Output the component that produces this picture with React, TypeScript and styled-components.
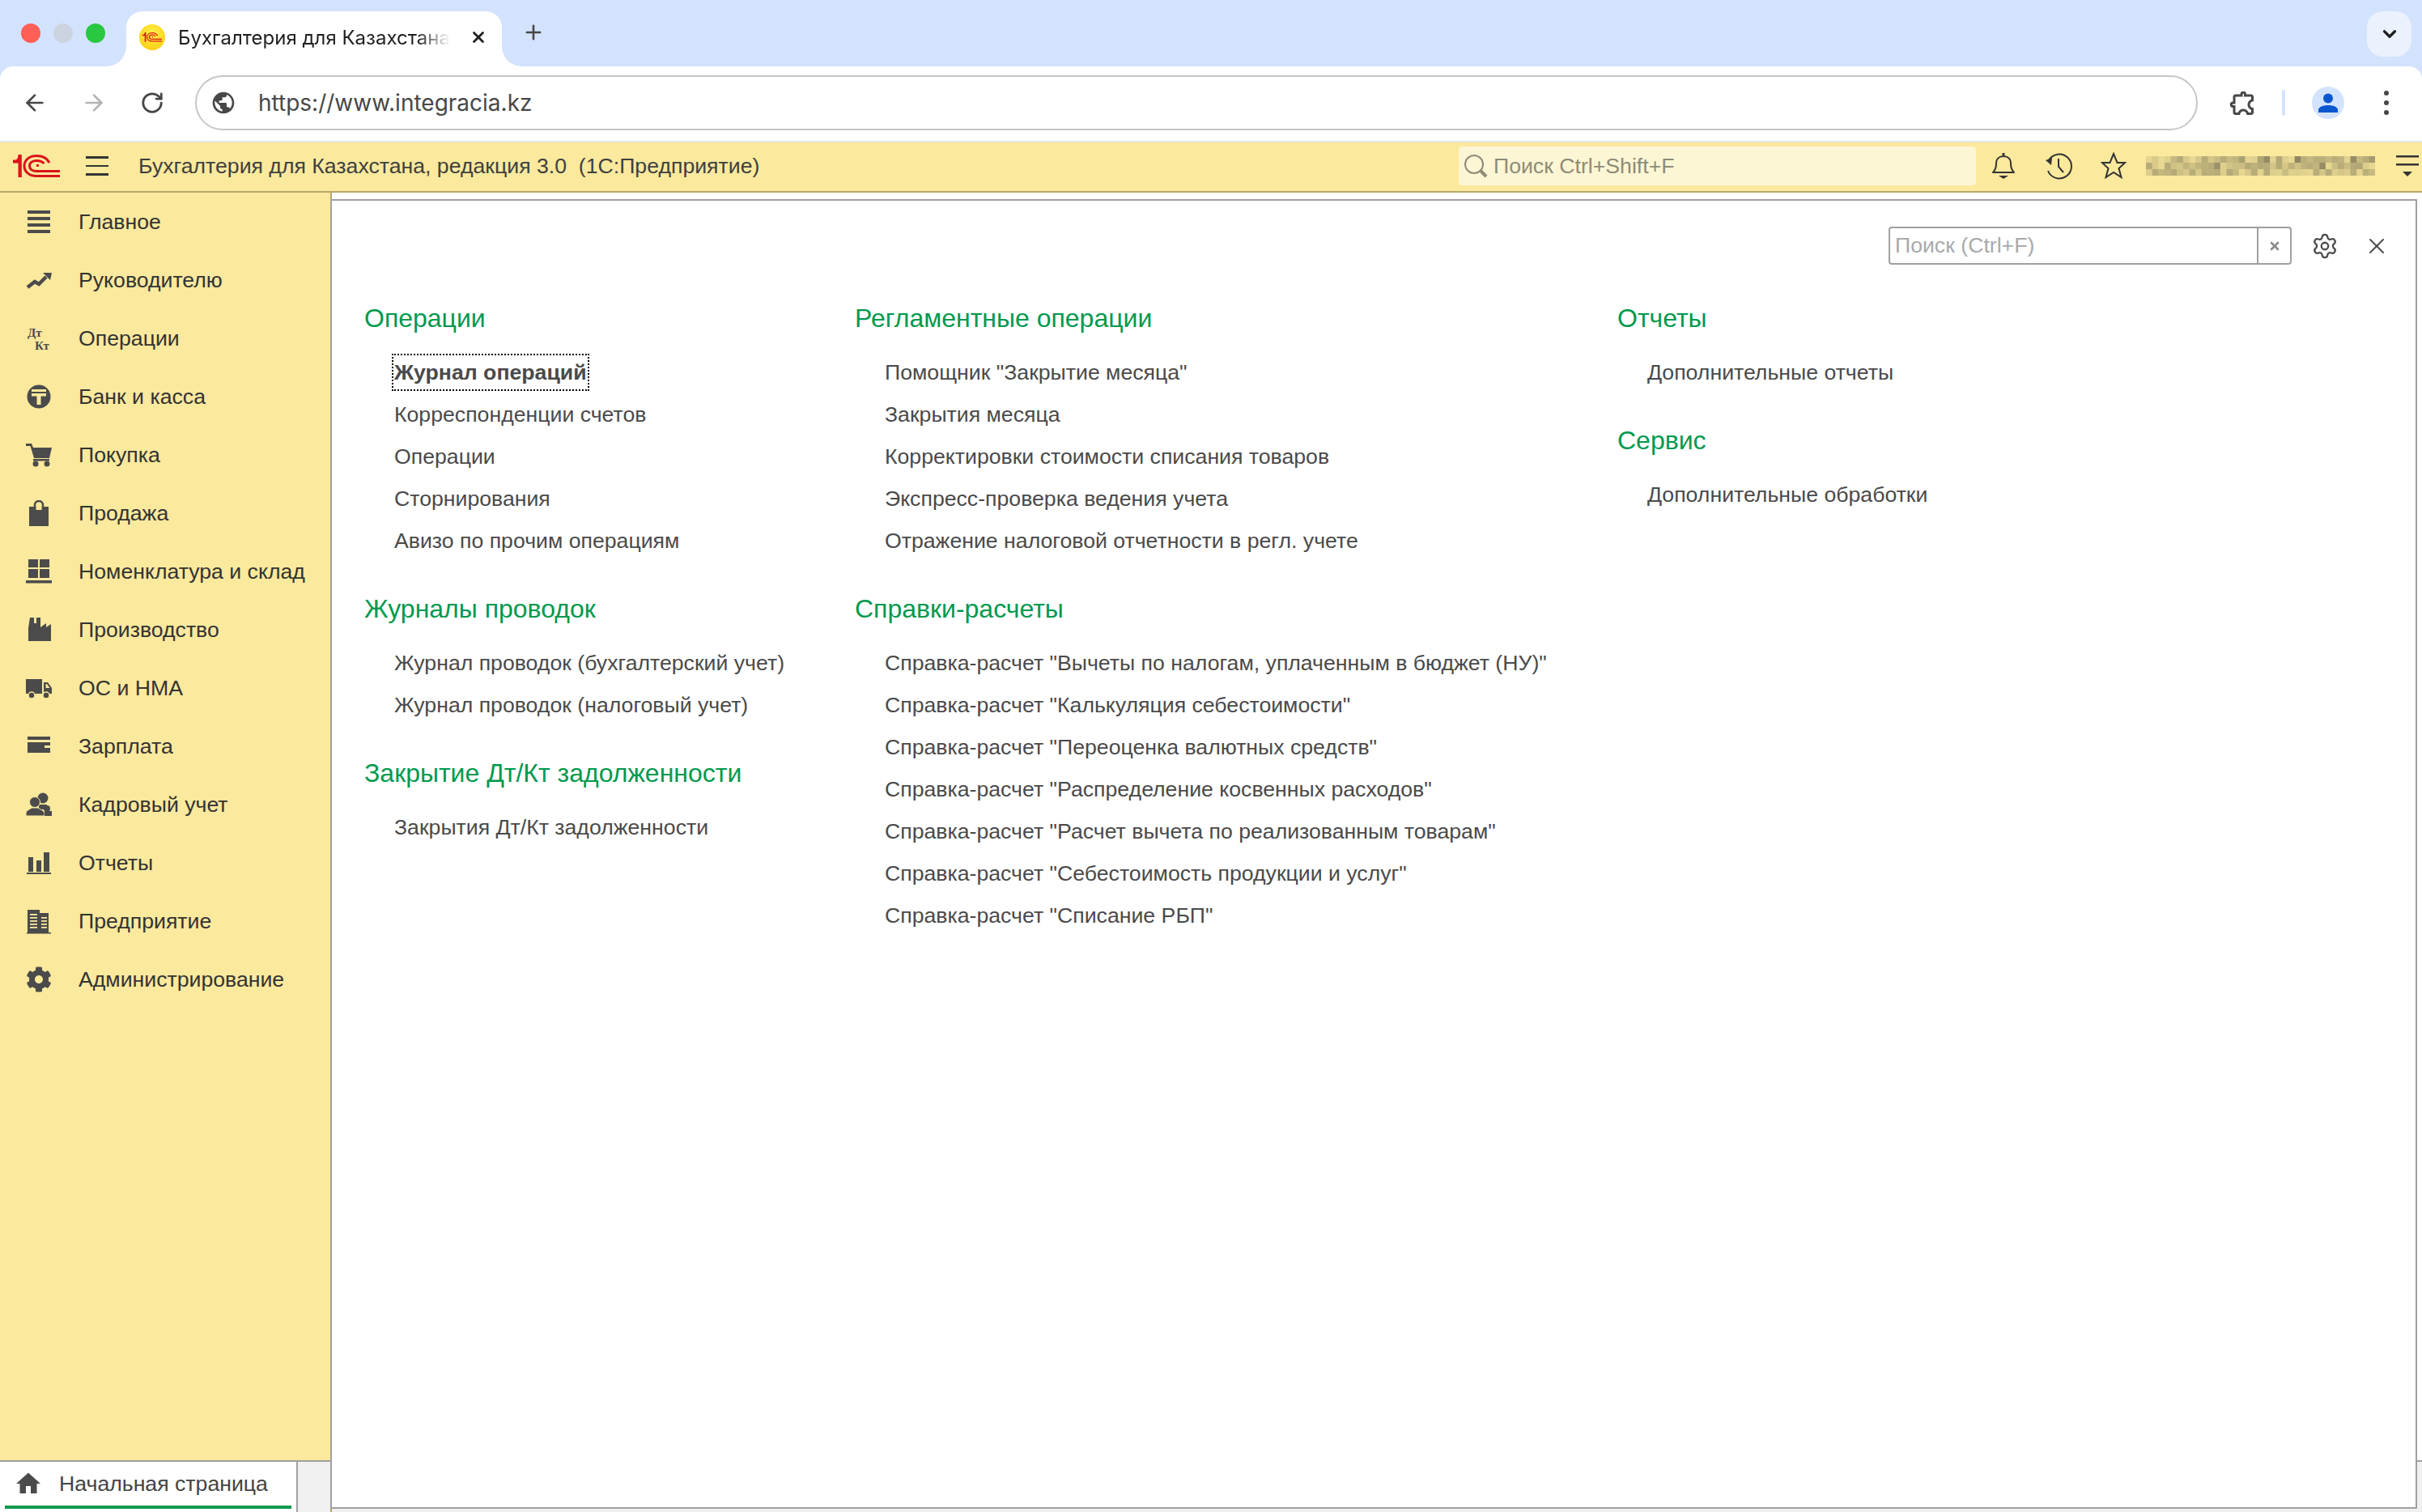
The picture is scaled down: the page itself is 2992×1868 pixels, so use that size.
import React from "react";
import styled, { createGlobalStyle } from "styled-components";
import { MdPublic, MdOutlineExtension, MdHome } from "react-icons/md";
import { FaCog } from "react-icons/fa";
import { ArrowLeft, ArrowRight, RotateCw, Plus, X, ChevronDown, Settings } from "lucide-react";

const GlobalStyle = createGlobalStyle`
  html, body { margin: 0; padding: 0; overflow: hidden; background: #fff; }
  body { font-family: "Liberation Sans", Arial, sans-serif; }
  * { box-sizing: border-box; }
`;

const Page = styled.div`
  display: flex;
  flex-direction: column;
  width: 100vw;
  height: 100vh;
  background: #d3e3fd;
`;

/* browser chrome */
const TabStrip = styled.div`
  display: flex;
  flex: 0 0 82px;
  padding-left: 26px;
`;
const Lights = styled.div`
  display: flex;
  gap: 16px;
  align-items: center;
  width: 130px;
  height: 82px;
`;
const Light = styled.span<{ $color: string }>`
  width: 24px;
  height: 24px;
  border-radius: 50%;
  background: ${(p) => p.$color};
`;
const Tab = styled.div`
  position: relative;
  display: flex;
  align-items: center;
  width: 464px;
  height: 68px;
  margin-top: 14px;
  padding: 0 0 4px 16px;
  background: #fff;
  border-radius: 20px 20px 0 0;

  &::before, &::after {
    content: "";
    position: absolute;
    bottom: 0;
    width: 24px;
    height: 24px;
  }
  &::before {
    left: -24px;
    background: radial-gradient(circle at 0 0, transparent 23.5px, #fff 24px);
  }
  &::after {
    right: -24px;
    background: radial-gradient(circle at 100% 0, transparent 23.5px, #fff 24px);
  }
`;
const Favicon = styled.div`
  display: flex;
  align-items: center;
  justify-content: center;
  flex: 0 0 32px;
  height: 32px;
  border-radius: 50%;
  background: radial-gradient(circle at 50% 35%, #fff04a, #fcd116 75%, #e8b820);
`;
const TabTitle = styled.div`
  flex: 0 0 336px;
  margin-left: 16px;
  overflow: hidden;
  white-space: nowrap;
  font-family: Inter, sans-serif;
  font-size: 24px;
  color: #1f1f1f;
  -webkit-mask-image: linear-gradient(to right, #000 88%, transparent 100%);
  mask-image: linear-gradient(to right, #000 88%, transparent 100%);
`;
const TabClose = styled.div`
  display: flex;
  margin-left: 24px;
  color: #1f1f1f;
`;
const NewTab = styled.div`
  display: flex;
  align-items: center;
  margin-left: 25px;
  height: 82px;
  padding-bottom: 2px;
  color: #474747;
`;
const TabListButton = styled.div`
  display: flex;
  align-items: center;
  justify-content: center;
  width: 55px;
  height: 56px;
  margin: 14px 13px 0 auto;
  border-radius: 20px;
  background: #ebf1fd;
  color: #1f1f1f;
`;

const Toolbar = styled.div`
  display: flex;
  align-items: center;
  flex: 0 0 94px;
  padding-left: 7px;
  padding-bottom: 2px;
  background: #fff;
  border-radius: 16px 16px 0 0;
  border-bottom: 2px solid #e3e3e3;
`;
const NavButton = styled.div<{ $muted?: boolean }>`
  display: flex;
  justify-content: center;
  width: 72.5px;
  color: ${(p) => (p.$muted ? "#b3b3b3" : "#474747")};
`;
const Omnibox = styled.div`
  display: flex;
  align-items: center;
  width: 2474px;
  height: 68px;
  margin-left: 16.5px;
  padding-left: 17px;
  border: 2px solid #c7c7c7;
  border-radius: 34px;
  color: #474747;
`;
const Url = styled.span`
  margin-left: 27px;
  font-family: Inter, sans-serif;
  font-size: 28px;
  color: #474747;
`;
const ExtensionSlot = styled.div`
  display: flex;
  justify-content: center;
  width: 60px;
  margin-left: 24px;
  color: #474747;
`;
const ToolbarDivider = styled.span`
  width: 4px;
  height: 32px;
  margin-left: 20px;
  border-radius: 2px;
  background: #d3e3fd;
`;
const Avatar = styled.div`
  display: flex;
  align-items: center;
  justify-content: center;
  width: 40px;
  height: 40px;
  margin-left: 33px;
  border-radius: 50%;
  background: #d3e3fd;
`;
const MenuDots = styled.div`
  display: flex;
  flex-direction: column;
  align-items: center;
  gap: 6px;
  width: 40px;
  margin-left: 32px;
`;
const Dot = styled.span`
  width: 6px;
  height: 6px;
  border-radius: 50%;
  background: #474747;
`;

/* 1C header */
const AppBar = styled.div`
  display: flex;
  align-items: center;
  flex: 0 0 62px;
  padding: 0 0 2px 16px;
  background: #fbe99d;
  border-bottom: 2px solid #b5a86e;
`;
const Burger = styled.div`
  display: flex;
  flex-direction: column;
  gap: 8px;
  width: 28px;
  margin-left: 32px;
`;
const BurgerLine = styled.span`
  height: 2.5px;
  background: #333;
`;
const AppTitle = styled.div`
  flex: 1;
  margin-left: 37px;
  font-size: 26.67px;
  color: #3f3f3f;
  white-space: pre;
`;
const GlobalSearch = styled.div`
  display: flex;
  align-items: center;
  width: 639px;
  height: 48px;
  padding-left: 5px;
  border-radius: 4px;
  background: #fdf6d4;
`;
const GlobalSearchText = styled.span`
  margin-left: 6px;
  font-size: 26.67px;
  color: #8e8b78;
`;
const BarIcon = styled.div`
  display: flex;
  justify-content: center;
  width: 68px;
  color: #333;
  &:first-of-type { margin-left: 7px; }
`;
const BlurredUser = styled.svg`
  display: block;
  width: 283px;
  height: 24px;
  margin-left: 6px;
`;
const FilterIcon = styled.div`
  display: flex;
  justify-content: center;
  width: 36px;
  margin-left: 22px;
`;

/* main area */
const Main = styled.div`
  flex: 1;
  display: grid;
  grid-template-columns: 408px 1fr;
  grid-template-rows: 1fr 64px;
  min-height: 0;
`;
const Sidebar = styled.nav`
  background: #fbe99d;
`;
const SideItem = styled.div`
  display: flex;
  align-items: center;
  height: 72px;
  padding-left: 32px;
  font-size: 26.67px;
  color: #333;
`;
const SideLabel = styled.span`
  margin-left: 33px;
`;
const SideIcon = styled.svg`
  flex: 0 0 32px;
  width: 32px;
  height: 32px;
  fill: #4b4b4b;
`;
const OpenTabs = styled.div`
  display: flex;
  background: #f0f0f0;
  border-top: 2px solid #a0a0a0;
`;
const HomeTab = styled.div`
  width: 368px;
  padding: 0 6px 4px;
  background: #fff;
  border-right: 2px solid #a0a0a0;
`;
const HomeTabInner = styled.div`
  display: flex;
  align-items: center;
  height: 100%;
  padding-left: 11px;
  border-bottom: 4px solid #00994d;
  font-size: 26.67px;
  color: #444;
`;
const HomeLabel = styled.span`
  margin-left: 20px;
  white-space: nowrap;
`;
const PanelArea = styled.div`
  grid-column: 2;
  grid-row: 1 / 3;
  display: flex;
  padding: 8px 6px 4px 0;
  border-left: 2px solid #b5a86e;
  background: linear-gradient(to bottom, #fff 1566px, #a0a0a0 1566px, #a0a0a0 1568px, #f0f0f0 1568px);
`;
const Panel = styled.section`
  flex: 1;
  margin-left: -2px;
  background: #fff;
  border: 2px solid #a0a0a0;
`;
const PanelTools = styled.div`
  display: flex;
  align-items: center;
  justify-content: flex-end;
  height: 47px;
  margin-top: 32px;
  padding-right: 28px;
`;
const FindBox = styled.div`
  display: flex;
  width: 498px;
  height: 47px;
  border: 2px solid #a0a0a0;
  border-radius: 4px;
`;
const FindInput = styled.div`
  flex: 1;
  padding-left: 6px;
  line-height: 43px;
  font-size: 26.67px;
  color: #a9a9a9;
`;
const FindClear = styled.div`
  display: flex;
  align-items: center;
  justify-content: center;
  width: 41px;
  border-left: 2px solid #a0a0a0;
  color: #8c8c8c;
`;
const ToolButton = styled.div<{ $gap: number }>`
  display: flex;
  justify-content: center;
  width: 40px;
  margin-left: ${(p) => p.$gap}px;
  color: #4b4b4b;
`;
const Columns = styled.div`
  display: grid;
  grid-template-columns: 606px 942px 1fr;
  margin-top: 46px;
  padding-left: 40px;
`;
const Section = styled.div`
  margin-bottom: 38px;
`;
const SectionTitle = styled.h3`
  height: 40px;
  margin: 0 0 21px;
  line-height: 40px;
  font-size: 32px;
  font-weight: 400;
  color: #00994d;
  white-space: nowrap;
`;
const Command = styled.div<{ $active?: boolean }>`
  height: 52px;
  padding-left: 37px;
  line-height: 52px;
  font-size: 26.67px;
  font-weight: ${(p) => (p.$active ? 700 : 400)};
  color: #4a4a4a;
  white-space: nowrap;
`;
const FocusFrame = styled.span`
  display: inline-block;
  height: 40px;
  line-height: 40px;
  outline: 2px dotted #000;
  outline-offset: 1px;
`;

const LogoMark = ({ width }: { width: number }) => (
  <svg width={width} viewBox="0 0 58 28" style={{ display: "block" }}>
    <path d="M0 6.5h3c2 0 3.5-2.5 3.5-6.5h4.3v28H6.5V10.5H0z" fill="#d9141c" />
    <g fill="none" stroke="#d9141c" strokeWidth="3">
      <path d="M45 10C42 4 37 1.5 29 1.5 20 1.500 14 7 14 14s6 12.500 15 12.500H58" />
      <path d="M38.500 11C36 8.500 33 7.500 29.500 7.500 24 7.500 20.500 10 20.500 14s3.500 6.500 9 6.500H58" />
      <path d="M32 13.500h-3" />
    </g>
  </svg>
);

const sideIcons: Record<string, React.ReactNode> = {
  main: (
    <>
      <rect x="2" y="2" width="28" height="4" />
      <rect x="2" y="10" width="28" height="4" />
      <rect x="2" y="18" width="28" height="4" />
      <rect x="2" y="26" width="28" height="4" />
    </>
  ),
  chart: (
    <>
      <path d="M2 25l9-7 5 3 9-9" fill="none" stroke="#4b4b4b" strokeWidth="4.500" />
      <path d="M21 7h11l-2 9z" />
    </>
  ),
  dtkt: (
    <g fontFamily="Liberation Serif, serif" fontWeight="700" fontSize="15">
      <text x="2" y="14">Дт</text>
      <text x="11" y="30">Кт</text>
    </g>
  ),
  bank: (
    <>
      <circle cx="16" cy="16" r="14.500" />
      <g fill="#fbe99d">
        <rect x="7" y="7" width="18" height="3" />
        <rect x="7" y="12" width="18" height="3.500" />
        <rect x="13.500" y="12" width="5" height="14" />
      </g>
    </>
  ),
  cart: (
    <>
      <path d="M0 2h7l2 5h23l-3 13H10L5.500 5H0z" />
      <rect x="9" y="21" width="20" height="2.500" />
      <circle cx="12" cy="27" r="3.500" />
      <circle cx="26" cy="27" r="3.500" />
    </>
  ),
  bag: (
    <>
      <path d="M4 8h24v24H4z" />
      <path d="M11 13V6a5 5 0 0 1 10 0v7" fill="none" stroke="#4b4b4b" strokeWidth="2.500" />
      <path d="M12.500 8h7v4h-7z" fill="#fbe99d" />
    </>
  ),
  stock: (
    <>
      <rect x="3" y="1" width="12" height="10" />
      <rect x="17" y="1" width="12" height="10" />
      <rect x="3" y="13" width="12" height="11" />
      <rect x="17" y="13" width="12" height="11" />
      <rect x="0" y="27" width="32" height="3.500" />
    </>
  ),
  factory: (
    <path d="M3 30V14l2-13h5v7h3V1h5v12l7-5v5l6-4v21z" />
  ),
  truck: (
    <>
      <path d="M0 5h20v18H0z" />
      <path d="M22 9h5l5 7v7H22zM24.500 11v5h5l-3.500-5z" fillRule="evenodd" />
      <circle cx="7" cy="25" r="4" stroke="#fbe99d" strokeWidth="1.500" />
      <circle cx="25" cy="25" r="4" stroke="#fbe99d" strokeWidth="1.500" />
    </>
  ),
  card: (
    <>
      <rect x="2" y="4" width="28" height="4" />
      <path d="M2 11h28v4h-7v3h7v6H2z" />
    </>
  ),
  people: (
    <>
      <circle cx="21" cy="8" r="6.500" />
      <circle cx="26" cy="21" r="4" />
      <path d="M16 16h10v6H16z" />
      <circle cx="11" cy="13" r="6.500" stroke="#fbe99d" strokeWidth="1" />
      <path d="M0 30v-3c0-4 5-5 7-7h8c2 2 8 3 8 7v3z" stroke="#fbe99d" strokeWidth="1" />
      <path d="M23 24h9v6h-9z" />
    </>
  ),
  bars: (
    <>
      <rect x="3" y="9" width="6" height="18" />
      <rect x="13" y="13" width="6" height="14" />
      <rect x="22" y="3" width="7" height="24" />
      <rect x="1" y="28" width="30" height="2" />
    </>
  ),
  office: (
    <>
      <path d="M2 2h15v4h11v24H2z" />
      <g fill="#fbe99d">
        <rect x="5" y="7" width="9" height="1.800" />
        <rect x="5" y="11" width="9" height="1.800" />
        <rect x="5" y="15" width="9" height="1.800" />
        <rect x="5" y="19" width="9" height="1.800" />
        <rect x="5" y="23" width="9" height="1.800" />
        <rect x="19" y="11" width="7" height="1.800" />
        <rect x="19" y="15" width="7" height="1.800" />
        <rect x="19" y="19" width="7" height="1.800" />
        <rect x="19" y="23" width="7" height="1.800" />
      </g>
      <rect x="1" y="30" width="30" height="1.500" />
    </>
  ),
};

const sidebarItems = [
  { label: "Главное", icon: "main" },
  { label: "Руководителю", icon: "chart" },
  { label: "Операции", icon: "dtkt" },
  { label: "Банк и касса", icon: "bank" },
  { label: "Покупка", icon: "cart" },
  { label: "Продажа", icon: "bag" },
  { label: "Номенклатура и склад", icon: "stock" },
  { label: "Производство", icon: "factory" },
  { label: "ОС и НМА", icon: "truck" },
  { label: "Зарплата", icon: "card" },
  { label: "Кадровый учет", icon: "people" },
  { label: "Отчеты", icon: "bars" },
  { label: "Предприятие", icon: "office" },
  { label: "Администрирование", icon: "gear" },
];

const sections = [
  [
    {
      title: "Операции",
      items: ["Журнал операций", "Корреспонденции счетов", "Операции", "Сторнирования", "Авизо по прочим операциям"],
    },
    { title: "Журналы проводок", items: ["Журнал проводок (бухгалтерский учет)", "Журнал проводок (налоговый учет)"] },
    { title: "Закрытие Дт/Кт задолженности", items: ["Закрытия Дт/Кт задолженности"] },
  ],
  [
    {
      title: "Регламентные операции",
      items: [
        'Помощник "Закрытие месяца"',
        "Закрытия месяца",
        "Корректировки стоимости списания товаров",
        "Экспресс-проверка ведения учета",
        "Отражение налоговой отчетности в регл. учете",
      ],
    },
    {
      title: "Справки-расчеты",
      items: [
        'Справка-расчет "Вычеты по налогам, уплаченным в бюджет (НУ)"',
        'Справка-расчет "Калькуляция себестоимости"',
        'Справка-расчет "Переоценка валютных средств"',
        'Справка-расчет "Распределение косвенных расходов"',
        'Справка-расчет "Расчет вычета по реализованным товарам"',
        'Справка-расчет "Себестоимость продукции и услуг"',
        'Справка-расчет "Списание РБП"',
      ],
    },
  ],
  [
    { title: "Отчеты", items: ["Дополнительные отчеты"] },
    { title: "Сервис", items: ["Дополнительные обработки"] },
  ],
];

// pixelated user name
const mosaicCells = () => {
  const cells: { x: number; y: number; o: number }[] = [];
  let seed = 37;
  for (let y = 0; y < 3; y++) {
    for (let x = 0; x < 37; x++) {
      seed = (seed * 137 + 59) % 1009;
      cells.push({ x: x * 7.65, y: y * 8, o: 0.12 + (seed / 1009) * (seed % 5 === 0 ? 0.65 : 0.38) });
    }
  }
  return cells;
};

export default function App() {
  return (
    <>
      <GlobalStyle />
      <Page>
        <TabStrip>
          <Lights>
            <Light $color="#ff5f57" />
            <Light $color="#ccd3e0" />
            <Light $color="#28c840" />
          </Lights>
          <Tab>
            <Favicon>
              <LogoMark width={24} />
            </Favicon>
            <TabTitle>Бухгалтерия для Казахстана</TabTitle>
            <TabClose>
              <X size={22} strokeWidth={3} />
            </TabClose>
          </Tab>
          <NewTab>
            <Plus size={28} strokeWidth={2.2} />
          </NewTab>
          <TabListButton>
            <ChevronDown size={26} strokeWidth={3} />
          </TabListButton>
        </TabStrip>

        <Toolbar>
          <NavButton>
            <ArrowLeft size={32} strokeWidth={2} />
          </NavButton>
          <NavButton $muted>
            <ArrowRight size={32} strokeWidth={2} />
          </NavButton>
          <NavButton>
            <RotateCw size={30} strokeWidth={2.2} />
          </NavButton>
          <Omnibox>
            <MdPublic size={32} />
            <Url>https://www.integracia.kz</Url>
          </Omnibox>
          <ExtensionSlot>
            <MdOutlineExtension size={36} style={{ transform: "scaleX(-1)" }} />
          </ExtensionSlot>
          <ToolbarDivider />
          <Avatar>
            <svg width="26" height="26" viewBox="0 0 26 26" fill="#0b57d0">
              <circle cx="13" cy="7.500" r="6" />
              <path d="M1 25v-3c0-4 6-6 12-6s12 2 12 6v3z" />
            </svg>
          </Avatar>
          <MenuDots>
            <Dot />
            <Dot />
            <Dot />
          </MenuDots>
        </Toolbar>

        <AppBar>
          <LogoMark width={58} />
          <Burger>
            <BurgerLine />
            <BurgerLine />
            <BurgerLine />
          </Burger>
          <AppTitle>Бухгалтерия для Казахстана, редакция 3.0  (1С:Предприятие)</AppTitle>
          <GlobalSearch>
            <svg width="32" height="32" viewBox="0 0 32 32" fill="none" stroke="#8e8b78">
              <circle cx="14" cy="14" r="11" strokeWidth="2" />
              <path d="M22 22l7 7" strokeWidth="4" />
            </svg>
            <GlobalSearchText>Поиск Ctrl+Shift+F</GlobalSearchText>
          </GlobalSearch>
          <BarIcon>
            <svg width="30" height="34" viewBox="0 0 30 34" fill="none" stroke="#333" strokeWidth="2">
              <path d="M2 25c3-3 4-6 4-11 0-6 4-9 9-9s9 3 9 9c0 5 1 8 4 11z" strokeLinejoin="round" />
              <path d="M15 1v3" strokeWidth="3" />
              <path d="M9 29h12l-6 4z" fill="#333" stroke="none" />
            </svg>
          </BarIcon>
          <BarIcon>
            <svg width="34" height="34" viewBox="0 0 34 34" fill="none" stroke="#333" strokeWidth="2">
              <path d="M5 10a15 15 0 1 1-1 13" />
              <path d="M1 10l8-3-1 9z" fill="#333" stroke="none" />
              <path d="M17 8v10l6 7" />
            </svg>
          </BarIcon>
          <BarIcon>
            <svg width="32" height="34" viewBox="0 0 32 34" fill="none" stroke="#333" strokeWidth="2">
              <path d="M16 2l4.500 11H30l-7.500 7 3 11L16 25l-9.500 6 3-11L2 13h9.500z" strokeLinejoin="miter" />
            </svg>
          </BarIcon>
          <BlurredUser viewBox="0 0 283 24">
            {mosaicCells().map((c) => (
              <rect key={`${c.x}-${c.y}`} x={c.x} y={c.y} width="7.700" height="8" fill="#6e6a50" opacity={c.o} />
            ))}
          </BlurredUser>
          <FilterIcon>
            <svg width="28" height="28" viewBox="0 0 28 28" fill="#333">
              <rect x="0" y="1" width="28" height="2.500" />
              <rect x="0" y="11" width="28" height="2.500" />
              <path d="M8 21h12l-6 6z" />
            </svg>
          </FilterIcon>
        </AppBar>

        <Main>
          <Sidebar>
            {sidebarItems.map((item) => (
              <SideItem key={item.label}>
                {item.icon === "gear" ? (
                  <FaCog size={32} color="#4b4b4b" style={{ flex: "0 0 32px" }} />
                ) : (
                  <SideIcon viewBox="0 0 32 32">{sideIcons[item.icon]}</SideIcon>
                )}
                <SideLabel>{item.label}</SideLabel>
              </SideItem>
            ))}
          </Sidebar>
          <OpenTabs>
            <HomeTab>
              <HomeTabInner>
                <MdHome size={36} color="#4b4b4b" />
                <HomeLabel>Начальная страница</HomeLabel>
              </HomeTabInner>
            </HomeTab>
          </OpenTabs>
          <PanelArea>
            <Panel>
              <PanelTools>
                <FindBox>
                  <FindInput>Поиск (Ctrl+F)</FindInput>
                  <FindClear>
                    <X size={16} strokeWidth={4} />
                  </FindClear>
                </FindBox>
                <ToolButton $gap={21}>
                  <Settings size={34} strokeWidth={1.6} />
                </ToolButton>
                <ToolButton $gap={24}>
                  <X size={32} strokeWidth={1.5} />
                </ToolButton>
              </PanelTools>
              <Columns>
                {sections.map((column, i) => (
                  <div key={i}>
                    {column.map((section) => (
                      <Section key={section.title}>
                        <SectionTitle>{section.title}</SectionTitle>
                        {section.items.map((label) =>
                          label === "Журнал операций" ? (
                            <Command key={label} $active>
                              <FocusFrame>{label}</FocusFrame>
                            </Command>
                          ) : (
                            <Command key={label}>{label}</Command>
                          )
                        )}
                      </Section>
                    ))}
                  </div>
                ))}
              </Columns>
            </Panel>
          </PanelArea>
        </Main>
      </Page>
    </>
  );
}
